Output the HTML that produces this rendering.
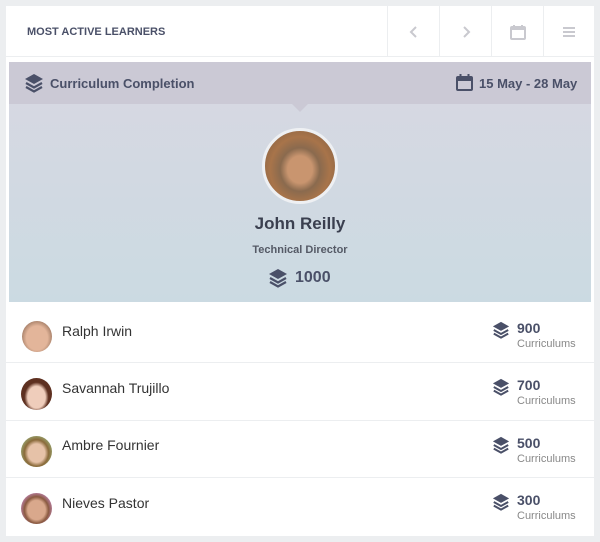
<!DOCTYPE html>
<html><head><style>
*{margin:0;padding:0;box-sizing:border-box}
body{width:600px;height:542px;background:#eceef0;font-family:"Liberation Sans",sans-serif;position:relative;overflow:hidden}
.card{position:absolute;left:6px;top:6px;width:588px;height:530px;background:#fff}
.hdr{position:absolute;left:0;top:0;width:588px;height:51px;border-bottom:1px solid #eceef0}
.title{position:absolute;left:21px;top:20px;font-size:11px;font-weight:bold;color:#4a5068}
.btn{position:absolute;top:0;height:51px;width:52px;border-left:1px solid #eceef0;display:flex;align-items:center;justify-content:center}
.banner{position:absolute;left:3px;top:56px;width:582px;height:240px;background:linear-gradient(#d8d8e2,#cbdae2)}
.bar{height:42px;background:#cbc9d5;position:relative;color:#4a5068;font-weight:bold;font-size:13px;white-space:nowrap}
.tri{position:absolute;left:283px;top:42px;width:0;height:0;border-left:8px solid transparent;border-right:8px solid transparent;border-top:8px solid #cbc9d5}
.av{position:absolute;border-radius:50%;overflow:hidden}
.name{position:absolute;font-size:14px;color:#333;white-space:nowrap}
.num{position:absolute;font-size:14px;font-weight:bold;color:#4a5068}
.sub{position:absolute;font-size:11px;color:#888;white-space:nowrap}
.line{position:absolute;left:6px;width:588px;height:1px;background:#eceef0}
</style></head><body>
<div class="card">
 <div class="hdr">
  <div class="title">MOST ACTIVE LEARNERS</div>
  <div class="btn" style="left:381px"><svg width="10" height="12"><path d="M7 1L2 6l5 5" stroke="#c9c9cf" stroke-width="2" fill="none"/></svg></div>
  <div class="btn" style="left:433px"><svg width="10" height="12"><path d="M3 1l5 5-5 5" stroke="#c9c9cf" stroke-width="2" fill="none"/></svg></div>
  <div class="btn" style="left:485px"><svg width="16" height="16"><rect x="1" y="3" width="14" height="12" rx="1" fill="none" stroke="#c9c9cf" stroke-width="2"/><rect x="1" y="3" width="14" height="3" fill="#c9c9cf"/><path d="M4 1v3M12 1v3" stroke="#c9c9cf" stroke-width="2"/></svg></div>
  <div class="btn" style="left:537px;width:51px"><svg width="14" height="12"><path d="M1 2h12M1 6h12M1 10h12" stroke="#c9c9cf" stroke-width="2"/></svg></div>
 </div>
 <div class="banner">
  <div class="bar">
   <svg style="position:absolute;left:15px;top:11px" width="20" height="20" viewBox="0 0 20 20"><path d="M10 1L1 6l9 5 9-5z" fill="#4a5068"/><path d="M2 10l8 4.5 8-4.5M2 14l8 4.5 8-4.5" stroke="#4a5068" stroke-width="2.2" fill="none"/></svg>
   <span style="position:absolute;left:41px;top:14px">Curriculum Completion</span>
   <svg style="position:absolute;left:447px;top:12px" width="17" height="17"><rect x="1" y="3" width="15" height="13" rx="1" fill="none" stroke="#4a5068" stroke-width="2"/><rect x="1" y="3" width="15" height="4" fill="#4a5068"/><path d="M4.5 0v4M12.5 0v4" stroke="#4a5068" stroke-width="2"/></svg>
   <span style="position:absolute;left:470px;top:14px">15 May - 28 May</span>
  </div>
  <div class="tri"></div>
  <div class="av" style="left:253px;top:66px;width:76px;height:76px;border:3px solid #eef0f3;background:radial-gradient(ellipse at 50% 55%,#c9956f 0 25%,#8a6a4e 40%,#a8744a 60%,#7a5a40)"></div>
  <div style="position:absolute;left:0;width:582px;top:152px;text-align:center;font-size:17px;font-weight:bold;color:#3a3f4f">John Reilly</div>
  <div style="position:absolute;left:0;width:582px;top:182px;text-align:center;font-size:11px;font-weight:bold;color:#555a66">Technical Director</div>
  <svg style="position:absolute;left:259px;top:206px" width="20" height="20" viewBox="0 0 20 20"><path d="M10 1L1 6l9 5 9-5z" fill="#4a5068"/><path d="M2 10l8 4.5 8-4.5M2 14l8 4.5 8-4.5" stroke="#4a5068" stroke-width="2.2" fill="none"/></svg>
  <div style="position:absolute;left:286px;top:207px;font-size:16px;font-weight:bold;color:#4a5068">1000</div>
 </div>
</div>
<div class="line" style="top:362px"></div>
<div class="line" style="top:420px"></div>
<div class="line" style="top:477px"></div>
<div class="av" style="left:22px;top:321px;width:30px;height:31px;background:radial-gradient(ellipse at 50% 55%,#e3b59a 0 50%,#b08870 70%,#c8ccd0)"></div>
<div class="name" style="top:323px;left:62px">Ralph Irwin</div>
<div class="av" style="left:21px;top:378px;width:31px;height:32px;background:radial-gradient(ellipse at 50% 60%,#efcdbb 0 40%,#5e3020 55%)"></div>
<div class="name" style="top:380px;left:62px">Savannah Trujillo</div>
<div class="av" style="left:21px;top:436px;width:31px;height:31px;background:radial-gradient(ellipse at 50% 55%,#e6c2a8 0 38%,#8a6a3a 55%,#9bb07a 80%)"></div>
<div class="name" style="top:437px;left:62px">Ambre Fournier</div>
<div class="av" style="left:21px;top:493px;width:31px;height:31px;background:radial-gradient(ellipse at 50% 55%,#d9a88c 0 40%,#8a5a40 55%,#c78ac0 80%)"></div>
<div class="name" style="top:495px;left:62px">Nieves Pastor</div>
<svg style="position:absolute;left:492px;top:321px" width="18" height="18" viewBox="0 0 20 20"><path d="M10 1L1 6l9 5 9-5z" fill="#4a5068"/><path d="M2 10l8 4.5 8-4.5M2 14l8 4.5 8-4.5" stroke="#4a5068" stroke-width="2.2" fill="none"/></svg>
<div class="num" style="left:517px;top:320px">900</div><div class="sub" style="left:517px;top:338px">Curriculums</div>
<svg style="position:absolute;left:492px;top:378px" width="18" height="18" viewBox="0 0 20 20"><path d="M10 1L1 6l9 5 9-5z" fill="#4a5068"/><path d="M2 10l8 4.5 8-4.5M2 14l8 4.5 8-4.5" stroke="#4a5068" stroke-width="2.2" fill="none"/></svg>
<div class="num" style="left:517px;top:377px">700</div><div class="sub" style="left:517px;top:395px">Curriculums</div>
<svg style="position:absolute;left:492px;top:436px" width="18" height="18" viewBox="0 0 20 20"><path d="M10 1L1 6l9 5 9-5z" fill="#4a5068"/><path d="M2 10l8 4.5 8-4.5M2 14l8 4.5 8-4.5" stroke="#4a5068" stroke-width="2.2" fill="none"/></svg>
<div class="num" style="left:517px;top:435px">500</div><div class="sub" style="left:517px;top:453px">Curriculums</div>
<svg style="position:absolute;left:492px;top:493px" width="18" height="18" viewBox="0 0 20 20"><path d="M10 1L1 6l9 5 9-5z" fill="#4a5068"/><path d="M2 10l8 4.5 8-4.5M2 14l8 4.5 8-4.5" stroke="#4a5068" stroke-width="2.2" fill="none"/></svg>
<div class="num" style="left:517px;top:492px">300</div><div class="sub" style="left:517px;top:510px">Curriculums</div>
</body></html>
